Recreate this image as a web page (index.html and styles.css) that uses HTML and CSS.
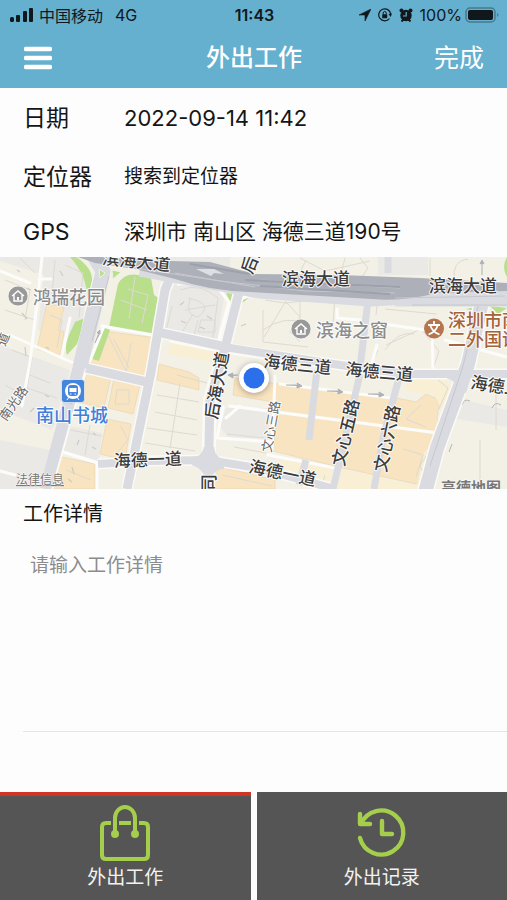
FILE: index.html
```html
<!DOCTYPE html>
<html lang="zh-CN">
<head>
<meta charset="utf-8">
<meta name="viewport" content="width=device-width, initial-scale=1">
<title>外出工作</title>
<link rel="stylesheet" href="styles.css">
</head>
<body>
<div class="app">
  <header class="header">
    <div class="status">
      <div class="status-side">
        <svg class="signal" viewBox="0 0 24 16" width="24" height="16" aria-hidden="true">
          <rect x="0" y="10" width="4" height="5" rx="1.500"/><rect x="6" y="8" width="4" height="7" rx="1"/><rect x="13" y="4" width="4" height="11" rx="1"/><rect x="19" y="1" width="4" height="14" rx="1"/>
        </svg>
        <span class="carrier">中国移动</span>
        <span class="network">4G</span>
      </div>
      <span class="clock">11:43</span>
      <div class="status-side status-right">
        <svg viewBox="0 0 12 12" width="12" height="12" aria-hidden="true"><path d="M12 0 0 6h6v6z" stroke="currentColor" stroke-width=".6"/></svg>
        <svg viewBox="0 0 14 14" width="14" height="14" aria-hidden="true"><path d="M11.500 10.500A6 6 0 1 1 12.700 6" fill="none" stroke="currentColor" stroke-width="1.200"/><path d="m10.500 6 2.200 3L14 5.500z"/><rect x="4.200" y="6.200" width="5" height="4" rx=".6"/><path d="M5.200 6.500V5a1.500 1.500 0 0 1 3 0v1.500" fill="none" stroke="currentColor"/></svg>
        <svg viewBox="0 0 14 14" width="14" height="14" aria-hidden="true"><circle cx="7" cy="7.500" r="5.700"/><circle cx="2.500" cy="2.500" r="2"/><circle cx="11.500" cy="2.500" r="2"/><path d="m2.500 13.500 2-2M11.500 13.500l-2-2" stroke="currentColor" stroke-width="2"/><path d="M7.200 4v4H4" fill="none" stroke="#63aecf" stroke-width="1.200"/></svg>
        <span class="percent">100%</span>
        <svg viewBox="0 0 34 16" width="34" height="16" aria-hidden="true"><rect x="1" y="1" width="29" height="14" rx="4" fill="none" stroke="#47798f" stroke-width="1.500"/><rect x="3" y="3" width="25" height="10" rx="2"/><path d="M32 6c2 1 2 3 0 4z" fill="#47798f"/></svg>
      </div>
    </div>
    <nav class="nav">
      <button class="menu" type="button" aria-label="菜单"><svg viewBox="0 0 28 24" width="28" height="24"><path d="M2 3h24M2 12h24M2 21h24" stroke="#fff" stroke-width="4.400" stroke-linecap="round"/></svg></button>
      <h1 class="title">外出工作</h1>
      <button class="done" type="button">完成</button>
    </nav>
  </header>

  <main class="main">
    <dl class="info">
      <div class="row row-first"><dt>日期</dt><dd class="date">2022-09-14 11:42</dd></div>
      <div class="row"><dt>定位器</dt><dd>搜索到定位器</dd></div>
      <div class="row row-last"><dt>GPS</dt><dd class="address">深圳市 南山区 海德三道190号</dd></div>
    </dl>

    <svg class="map" viewBox="0 257 507 232" preserveAspectRatio="xMidYMid slice" role="img" aria-label="地图">
      <rect y="257" width="507" height="232" fill="#f3f0e6"/>
      <g fill="#eae9e5">
        <path d="M0 257h80l8 25-8 60-42-12 6-55-44-14zM0 345l70 25-18 60-52-20zM0 440l50 10-12 39H0zM170 283l55 8-8 50-54-9zM226 408h45l-3 31-40-2-8-10zM378 257h50v18h-50zM465 400l42 10v17l-50-8zM64 425l38 8-3 28-42-12zM170 257h60v14l-60-8z"/>
      </g>
      <g fill="#f8e4c1" stroke="#ead6b2" stroke-width=".7">
        <path d="M47 303l17 5-6 22 6 2-4 25-23-8zM103 331l54 7-11 42-56-17zM87 371l24 6-7 31-25-6zM114 378l26 7-7 29-25-6zM107 419l24 5-6 36-25-6zM57 456l38 8v25H50zM217 466l58 14v9h-62zM159 364l30 8 10 6v12l-42-10z"/>
        <path d="M235 378l44 6 80 9 33 4 24 5 10-8 14 6-3 18 4 8-9 24-3 20-13 14-77-17-66-16 6-48-46-8z"/>
      </g>
      <g fill="#f8efd4">
        <path d="M342 469l76 17-1 3h-80zM280 457l52 12-2 16-51-14zM170 342l43 8-2 12-43-8zM442 410l12-21-13-13-37 2 2 14 28 2zM434 442l-10 44-8 3 8-36z"/>
      </g>
      <g fill="#b9de8c">
        <path d="M118 284q6-12 21-9l12 3 3 17 8 5-5 35-48-8zM75 322l10-4-8 26-10 11q-3-9 2-20zM105 328l5 2-11 31-7-2zM70 257h6q20 13 15 29l-4 20q3-27-17-49zM226 293l9 1-5 8zM240 294l11 2-10 8zM466 309l15-3-3 6zM490 306l17 2-9 6zM507 257v20q-6-10 0-20zM456 372l7-17-2 20z"/>
      </g>
      <g fill="none" stroke="#dedad1" stroke-width="1">
        <path d="M5 280l25 10-5 30M55 260l-3 35 30 10M5 310l30 10M50 315l12 5-5 28M65 265l18 8-4 45M20 258l15 15M12 350l20 8-5 30 30 10M5 385l22 12M30 375l20 8M70 430l32 6M90 425l-5 30M66 470l25 10M117 390h12v14h-14zM120 425l8 15-12 14M108 335l21 42M114 340l15 28M131 343l-5 30M180 290q20-8 38 8l-6 45-38-8M190 299q-5 17 8 18 17-13-10-19M193 314l-12 20M215 305l-30 5M201 320h14v12h-17zM198 320l-5 19M265 300l20 3 28-3 42 2M263 310v32l45 5M286 301l-22 36M286 302l14 15-10 15 10 10M300 300v24M335 297l-2 27M263 330q20-15 43-7M344 293l34 4-2 18M385 309l52 5M386 345l35-16 18 22-6 18M385 350q14-20 29-16M411 287l4 18M300 258l25 13 45-10M300 272l6-12M345 258l-4 16M360 258l8 10-6 9M430 258v18M454 280q-2-20 14-21M177 375l30 8M157 395l42 7M155 412l42 8M147 428l50 7M180 383l-10 65M145 443l50 8M227 434l46 5M234 447l32 6M222 475l50 11M325 475l-4 14M421 405l-15 14 20 8M434 442l-14 24 6 12M403 449l20 6-7 22M480 440v45M496 390v40M378 350l-8 18M438 380l10 8-9 21M172 306l-6 25M128 289l20 6-6 28M121 300l26 10M135 277l-6 42"/>
        <path stroke="#b8b6b2" d="M462 405q2-7 8-4M492 408q3-7 9-3M452 444l-3 8"/>
      </g>
      <g fill="none" stroke="#fcfcfa" stroke-linecap="round" stroke-linejoin="round">
        <path stroke-width="3" d="M42 257l-3 30-9 75-8 44M0 335l12 1 66 29M70 318l-8 37M102 326l57 10M103 328l-13 33M30 283l-30-12M39 279h12M60 451l38 12M97 463v26M0 471l15 4M230 406l208 27M275 376l-3 75M223 407l-6 31 55 4M240 406l-14 12M280 384l112 14M268 455l67 13M377 323l55 8 1 39M377 345l-7 25M445 340l62 17M178 284q36-3 44 9l7 9-12 45M260 296q-20-3-27 15l-10 37M337 309v9l23 2"/>
      </g>
      <g fill="none" stroke="#fbfaf6" stroke-linejoin="round">
        <path stroke-width="12" d="M174 268l-9 22-14 82-24 117M240 288l-16 64M86 368l65 15M162 333l64 14"/>
        <path stroke-width="14" d="M224 352l-14 48-2 89M96 253l8 10-10 38-14 70-15 49-19 69"/>
        <path stroke-width="11" d="M170 337l60 12 110 16 67 9 100 0M98 464l52-3 58-1 50 8 77 21"/>
        <path stroke-width="17" d="M482 302l-14 62-31 84-12 45"/>
      </g>
      <g fill="none" stroke="#d9dbe0" stroke-linejoin="round">
        <path stroke-width="15" d="M94 256l9 15-9 38-14 58"/>
        <path stroke-width="12" d="M81 360l-17 60-19 69"/>
        <path stroke-width="9" d="M174 268l-9 22-14 82-24 117M240 288l-16 64-14 48-2 89M86 368l65 15M162 333l64 14"/>
        <path stroke-width="8" d="M224 347l116 18 67 9 100 0M98 464l52-3 58-1 50 8 77 21"/>
        <path stroke-width="7" d="M317 370l-8 70M360 374l-14 60-13 55M400 374l-17 64-9 51M306 460l-7 25M368 300l-8 68M388 257v16"/>
        <path stroke-width="14" d="M482 302l-14 62-31 84-12 45"/>
        <path stroke-width="15" d="M140 269l120 22 110 8 80-4 57 2"/>
        <path stroke-width="7" d="M252 257l-6 18M395 303h112"/>
      </g>
      <path d="M204 447h10q1 10 10 13v9q-10 0-12 9h-8q0-9-12-13v-8q10 0 12-10zM453 372q9-1 10-12l10 3q-4 8-2 15l-5 15-8-2q0-10-12-13v-7z" fill="#d9dbe0"/>
      <path d="M99 269l6 4-5 5zM112 270l9 2-8 7z" fill="#b9de8c" stroke="#eef1e3"/>
      <g fill="#adb0b8">
        <path d="M78 257h22l70 4 40 1 45 12 85 1 80 3 87 5v8l-70 2q-35 9-65 6l-122-7q-40-1-75-13l-40-10-40-6z"/>
      </g>
      <g fill="none" stroke="#c6c8cf" stroke-width="1">
        <path d="M120 266l100 15 85 10 90 2M175 273l80 14M260 280l140 8M478 306l-15 60-33 100M109 276l-17 65M395 298l110-2M412 305h95"/>
      </g>
      <g fill="none" stroke="#9da1ab" stroke-width="2"><path d="M245 280l155 7M190 264l60 10M260 286l130 8"/></g>
      <path d="M196 269l18 0 10 5-10-1-3 3z" fill="#dde0e3"/>
      <g fill="#adb0b7" stroke="#adb0b7">
        <path d="M286 385h12l-1-2 5 3-5 2v-2M327 391h12l-1-2 5 3-5 2v-2M368 394h12l-1-2 5 3-5 2v-2M238 375h-6l1-2-5 2 5 3v-2M482 275v-12l-2 1 2-4 2 4-2-1M95 343l4-10-2 0 3-3v4"/>
      </g>
      <g fill="none" stroke="#cecbc5" stroke-width="1.200">
        <path d="M22 313l5 6M27 288l4 2M17 270l3 2M60 271l3 5M25 347l1 9M65 401l7 3M79 440l-2 5M93 433l3 2M50 423l4 1M30 412l4-4M45 395l4 2M46 347l3 2M180 305l4-3M181 321l5 2M207 316l5 3M200 327l5 2M241 326l5-2M62 291l4 2M92 447l4 2M72 467l2 7M68 479l4 3"/>
      </g>

      <g class="road">
        <text transform="translate(102 264) rotate(6)">滨海大道</text>
        <text x="282" y="285">滨海大道</text>
        <text x="429" y="292">滨海大道</text>
        <text transform="translate(252 275) rotate(-68)">后海</text>
        <text transform="translate(263 367) rotate(6)">海德三道</text>
        <text transform="translate(345 375) rotate(5)">海德三道</text>
        <text transform="translate(470 388) rotate(9)">海德三道</text>
        <text transform="translate(114 467) rotate(-2)">海德一道</text>
        <text transform="translate(248 472) rotate(12)">海德一道</text>
        <text transform="translate(217 420) rotate(-80)">后海大道</text>
        <text transform="translate(215 491) rotate(-90)">司</text>
        <text transform="translate(344 467) rotate(-77)">文心五路</text>
        <text transform="translate(386 473) rotate(-78)">文心六路</text>
        <text class="minor" transform="translate(271 453) rotate(-80)">文心三路</text>
        <text class="minor" transform="translate(6 422) rotate(-55)">南光路</text>
        <text class="minor" transform="translate(5 347) rotate(-68)">道</text>
      </g>
      <g class="place">
        <text x="33" y="304">鸿瑞花园</text>
        <text x="316" y="337">滨海之窗</text>
        <text class="station" x="36" y="422">南山书城</text>
        <text class="school" x="448" y="327">深圳市南山</text>
        <text class="school" x="448" y="346">二外国语学校</text>
      </g>
      <g id="home" transform="translate(18 296)">
        <circle r="10" fill="#999" stroke="#fff" stroke-opacity=".7"/>
        <path d="M-6 0 0-5 6 0M-4-1v6h8v-6" fill="none" stroke="#fff" stroke-width="1.400"/><path d="M-1 1h2v3h-2z" fill="#fff"/>
      </g>
      <use href="#home" transform="translate(283 33)"/>
      <circle cx="434" cy="328.500" r="10" fill="#b5764d"/>
      <path d="M428 325h12M434 321v4M437.500 326q-2 6-9 8.500M430.500 326q2 6 9 8.500" fill="none" stroke="#fff" stroke-width="1.800"/>
      <rect x="61.500" y="379.500" width="23" height="23" rx="3" fill="#4386dc" stroke="#fff" stroke-opacity=".6"/>
      <circle cx="73" cy="391" r="8" fill="#fff"/>
      <rect x="68" y="385" width="10" height="11" rx="3" fill="#4386dc"/><rect x="69.500" y="388" width="7" height="4" fill="#fff"/><path d="M70 394h1.500M74.500 394H76M69 397l-2 3M77 397l2 3" stroke="#fff"/>
      <circle class="pin-ring" cx="254" cy="378" r="15" fill="#fff"/>
      <circle cx="254" cy="378" r="10.500" fill="#2c6fea"/>
      <text class="legal" x="16" y="484">法律信息</text>
      <text class="brand" x="441" y="493">高德地图</text>
    </svg>

    <section class="details">
      <label class="details-label" for="details">工作详情</label>
      <textarea class="details-input" id="details" placeholder="请输入工作详情"></textarea>
    </section>
  </main>

  <footer class="tabs">
    <button class="tab tab-active" type="button">
      <svg viewBox="0 0 52 56" width="52" height="56" aria-hidden="true" fill="none" stroke="#a5ce4c" stroke-width="4" stroke-linecap="butt"><path d="M12 18H7q-4 0-4 4v28q0 4 4 4h38q4 0 4-4V22q0-4-4-4h-5M20 18h12M16 28V13a10 11 0 0 1 20 0v15"/><circle cx="16" cy="29" r="4" fill="#a5ce4c" stroke="none"/><circle cx="36" cy="29" r="4" fill="#a5ce4c" stroke="none"/></svg>
      <span>外出工作</span>
    </button>
    <button class="tab" type="button">
      <svg viewBox="0 0 52 56" width="52" height="56" aria-hidden="true" fill="none" stroke="#a5ce4c" stroke-width="4.400" stroke-linecap="round" stroke-linejoin="round"><path d="M4 33A22 22 0 1 0 5 19M4 9v10h10"/><path d="M26 16v13h10"/></svg>
      <span>外出记录</span>
    </button>
  </footer>
</div>
</body>
</html>
```

FILE: styles.css
```css
* { box-sizing: border-box; }
body {
  margin: 0;
  background: #fdfdfd;
  color: #151515;
  font-family: Inter, "Noto Sans CJK SC", sans-serif;
}
button {
  padding: 0;
  border: 0;
  background: none;
  color: inherit;
  font: inherit;
}
svg { display: block; flex: none; }
.app {
  display: flex;
  flex-direction: column;
  min-height: 100vh;
}
.header { background: #65afcf; }
.status {
  display: grid;
  grid-template-columns: 1fr auto 1fr;
  align-items: center;
  height: 30px;
  padding: 0 8px 0 10px;
  color: #10181c;
  font-size: 16px;
}
.status svg { fill: currentColor; }
.status-side { display: flex; align-items: center; }
.status-right { justify-content: flex-end; gap: 7px; }
.carrier { margin-left: 5px; }
.network { margin-left: 12px; }
.clock { font-weight: 600; }
.percent { margin-right: -4px; }
.nav {
  display: grid;
  grid-template-columns: 1fr auto 1fr;
  align-items: center;
  height: 58px;
  padding: 0 23px 3px 24px;
  color: #fff;
}
.menu { justify-self: start; }
.title { margin: 0; font-size: 24px; font-weight: 500; line-height: 36px; }
.done { justify-self: end; font-size: 25px; line-height: 36px; }
.main { flex: 1; }
.info { margin: 0; }
.row {
  display: grid;
  grid-template-columns: 101px 1fr;
  align-items: center;
  height: 58px;
  padding-left: 23px;
}
.row-last { height: 51px; }
.row-first { height: 60px; }
.row dt { font-size: 23px; line-height: 32px; }
.row dd { margin: 0; font-size: 19px; line-height: 32px; }
.row .date { font-size: 22px; }
.row .address { font-size: 21px; }
.map { width: 100%; height: 232px; }
.map text { paint-order: stroke; stroke: #fffd; stroke-width: 2px; stroke-linejoin: round; }
.road text { font-size: 17px; font-weight: 500; fill: #3c3c3c; }
.road .minor { font-size: 13px; font-weight: 400; fill: #666; }
.place text { font-size: 18px; font-weight: 500; fill: #8c8c8c; }
.place .station { fill: #3f80d8; }
.place .school { fill: #a5633b; }
.map .legal { font-size: 12px; fill: #777; text-decoration: underline; stroke-width: 1px; }
.map .brand { font-size: 15px; font-weight: 700; fill: #777; stroke-width: 1px; }
.pin-ring { filter: drop-shadow(0 1px 3px #0005); }
.details { padding-left: 23px; }
.details-label {
  display: block;
  padding: 9px 0 8px;
  font-size: 20px;
  line-height: 32px;
}
.details-input {
  display: block;
  width: 100%;
  height: 194px;
  padding: 12px 7px;
  border: 0;
  border-bottom: 1px solid #e4e4e4;
  outline: 0;
  background: transparent;
  color: inherit;
  font-family: inherit;
  font-size: 19px;
  line-height: 32px;
  resize: none;
}
.details-input::placeholder { color: #8c8c8c; }
.tabs {
  display: grid;
  grid-template-columns: 1fr 1fr;
  gap: 6px;
}
.tab {
  display: flex;
  flex-direction: column;
  align-items: center;
  gap: 2px;
  height: 108px;
  padding-top: 9px;
  border-top: 4px solid #555;
  background: #555;
  color: #f2f2f2;
  font-size: 19px;
  line-height: 30px;
}
.tab-active { border-top-color: #d03425; }
```
